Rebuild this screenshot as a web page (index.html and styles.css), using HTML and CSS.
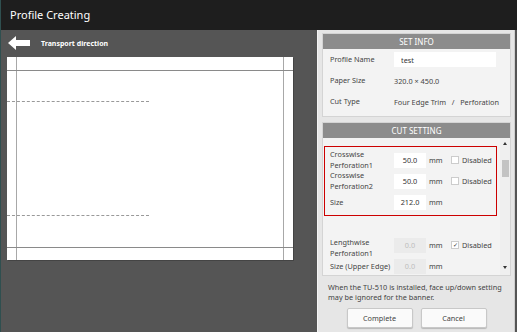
FILE: index.html
```html
<!DOCTYPE html>
<html lang="en">
<head>
  <meta charset="UTF-8">
  <title>Profile Creating</title>
  <link rel="stylesheet" href="styles.css">
</head>
<body>

<div class="window">
  <div class="titlebar">Profile Creating</div>

  <div class="main">
    <div class="preview">
      <div class="direction">
        <svg class="arrow" width="22" height="14" viewBox="0 0 22 14">
          <polygon points="0,7 8,0 8,4 22,4 22,10 8,10 8,14" fill="#fff"/>
        </svg>
        <span>Transport direction</span>
      </div>

      <div class="paper">
        <div class="line v left"></div>
        <div class="line v right"></div>
        <div class="line h top"></div>
        <div class="line h bottom"></div>
        <div class="dash d1"></div>
        <div class="dash d2"></div>
      </div>
    </div>

    <div class="panel">
      <div class="section info">
        <div class="section-head">SET INFO</div>
        <div class="row">
          <span class="label">Profile Name</span>
          <input class="field name" type="text" value="test">
        </div>
        <div class="row">
          <span class="label">Paper Size</span>
          <span class="value">320.0 × 450.0</span>
        </div>
        <div class="row">
          <span class="label">Cut Type</span>
          <span class="value">Four Edge Trim&nbsp;&nbsp;&nbsp;/&nbsp;&nbsp;&nbsp;Perforation</span>
        </div>
      </div>

      <div class="section cut">
        <div class="section-head">CUT SETTING</div>
        <div class="scroller">
          <div class="scroll-body">
            <div class="group selected">
              <div class="row">
                <span class="label">Crosswise<br>Perforation1</span>
                <input class="field num" type="text" value="50.0">
                <span class="unit">mm</span>
                <label class="check"><span class="box"></span>Disabled</label>
              </div>
              <div class="row">
                <span class="label">Crosswise<br>Perforation2</span>
                <input class="field num" type="text" value="50.0">
                <span class="unit">mm</span>
                <label class="check"><span class="box"></span>Disabled</label>
              </div>
              <div class="row">
                <span class="label">Size</span>
                <input class="field num" type="text" value="212.0">
                <span class="unit">mm</span>
              </div>
            </div>

            <div class="group">
              <div class="row">
                <span class="label low">Lengthwise<br>Perforation1</span>
                <input class="field num" type="text" value="0.0" disabled>
                <span class="unit">mm</span>
                <label class="check"><span class="box on">✓</span>Disabled</label>
              </div>
              <div class="row">
                <span class="label">Size (Upper Edge)</span>
                <input class="field num" type="text" value="0.0" disabled>
                <span class="unit">mm</span>
              </div>
            </div>
          </div>

          <div class="scrollbar">
            <span class="tri up"></span>
            <span class="thumb"></span>
            <span class="tri down"></span>
          </div>
        </div>
      </div>

      <p class="note">When the TU-510 is installed, face up/down setting may be ignored for the banner.</p>

      <div class="actions">
        <button>Complete</button>
        <button>Cancel</button>
      </div>
    </div>
  </div>
</div>

</body>
</html>
```

FILE: styles.css
```css
body {
  margin: 0;
  font-family: 'Noto Sans', sans-serif;
  background: #555555;
}

.window {
  width: 517px;
  height: 332px;
  display: flex;
  flex-direction: column;
  border-left: 1px solid #2f4f4f;
  box-sizing: border-box;
}

.titlebar {
  height: 30px;
  flex: none;
  background-color: #1e1e1e;
  color: #ffffff;
  font-size: 11px;
  line-height: 30px;
  padding-left: 9px;
}

.main {
  flex: 1;
  display: flex;
  background-color: #555555;
}

.preview {
  width: 316px;
  flex: none;
}

.direction {
  height: 27px;
  display: flex;
  align-items: center;
  padding-left: 7px;
  color: #ffffff;
  font-size: 7px;
  font-weight: bold;
}

.direction .arrow {
  margin-right: 11px;
  margin-top: -2px;
}

.paper {
  position: relative;
  width: 286px;
  height: 203px;
  margin-left: 6px;
  background-color: #ffffff;
  box-shadow: 1px 1px 0 #444444;
}

.line {
  position: absolute;
  background-color: #a8a8a8;
}

.line.v {
  top: 0;
  bottom: 0;
  width: 1px;
}

.line.h {
  left: 0;
  right: 0;
  height: 1px;
  background-color: #8a8a8a;
}

.line.left { left: 9px; }
.line.right { left: 276px; }
.line.top { top: 13px; }
.line.bottom { top: 190px; }

.dash {
  position: absolute;
  left: 0;
  width: 142px;
  border-top: 1px dashed #999999;
}

.dash.d1 { top: 44px; }
.dash.d2 { top: 158px; }

.panel {
  width: 198px;
  flex: none;
  background-color: #e6e6e6;
  border-left: 1px solid #f4f4f4;
  border-right: 1px solid #cfcfcf;
  box-sizing: border-box;
  padding: 3px 3px 0 4px;
  display: flex;
  flex-direction: column;
  font-size: 7.3px;
  color: #444444;
}

.section {
  background-color: #f3f3f3;
  border: 1px solid #d4d4d4;
}

.section-head {
  height: 15px;
  line-height: 15px;
  background-color: #8c8c8c;
  color: #ffffff;
  text-align: center;
  font-size: 8px;
}

.row {
  display: flex;
  align-items: center;
  white-space: nowrap;
}

.label {
  width: 64px;
  flex: none;
  line-height: 11px;
}

.label.low {
  margin-top: 5px;
}

.info {
  padding-bottom: 4px;
}

.info .row {
  height: 21px;
  padding-left: 7px;
}

.info .row:first-of-type {
  margin-top: 3px;
}

.field {
  border: none;
  outline: none;
  background-color: #ffffff;
  font-family: 'Noto Sans', sans-serif;
  font-size: 7.3px;
  color: #333333;
  height: 15px;
  padding: 0 7px;
  box-sizing: border-box;
}

.field.name {
  width: 102px;
}

.field.num {
  width: 32px;
  padding: 0;
  text-align: center;
}

.field:disabled {
  background-color: #ebebeb;
  color: #bdbdbd;
}

.cut {
  margin-top: 5px;
}

.scroller {
  display: flex;
  height: 137px;
}

.scroll-body {
  flex: 1;
  padding: 8px 0 0 1px;
}

.group {
  padding: 3px 0 3px 6px;
}

.group .row {
  height: 20px;
  margin-bottom: 1px;
}

.group .row:last-child {
  margin-bottom: 0;
}

.group.selected {
  border: 1px solid #cc0000;
  width: 173px;
  box-sizing: border-box;
  padding: 3px 0 3px 5px;
}

.group + .group {
  margin-top: 19px;
  padding-top: 0;
}

.unit {
  margin-left: 3px;
  width: 22px;
}

.check {
  display: flex;
  align-items: center;
}

.box {
  width: 6px;
  height: 6px;
  border: 1px solid #cccccc;
  background-color: #ffffff;
  margin-right: 3px;
  font-size: 6px;
  line-height: 6px;
  text-align: center;
  color: #333333;
}

.scrollbar {
  width: 10px;
  display: flex;
  flex-direction: column;
  align-items: center;
  background-color: #efefef;
  padding-top: 4px;
}

.tri {
  width: 0;
  height: 0;
  border-left: 2px solid transparent;
  border-right: 2px solid transparent;
}

.tri.up {
  border-bottom: 3px solid #333333;
}

.tri.down {
  border-top: 3px solid #333333;
  margin-top: auto;
  margin-bottom: 6px;
}

.thumb {
  width: 7px;
  height: 17px;
  background-color: #c3c3c3;
  margin-top: 15px;
}

.note {
  margin: 6px 0 0 6px;
  line-height: 10px;
  color: #444444;
}

.actions {
  display: flex;
  justify-content: center;
  gap: 8px;
  margin-top: 6px;
}

.actions button {
  width: 66px;
  height: 20px;
  background-color: #fafafa;
  border: 1px solid #c8c8c8;
  border-radius: 2px;
  font-family: 'Noto Sans', sans-serif;
  font-size: 7.3px;
  color: #444444;
  box-shadow: 0 1px 1px rgba(0, 0, 0, 0.2);
}
```
